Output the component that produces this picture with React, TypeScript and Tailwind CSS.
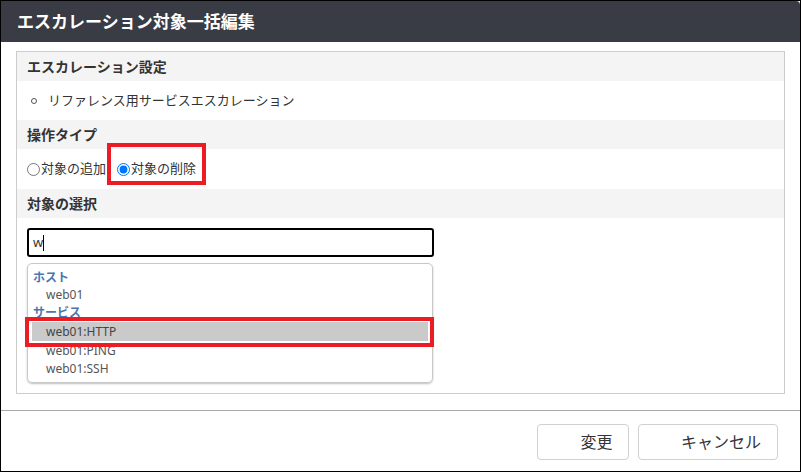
import React from "react";

const font = { fontFamily: '"Noto Sans", "Noto Sans CJK JP", sans-serif' };

function SectionHeader({ children }: { children: React.ReactNode }) {
  return (
    <div className="h-[29px] bg-[#f4f4f4] px-[10px] flex items-center text-[14px] font-bold text-[#333]">
      {children}
    </div>
  );
}

const items = [
  { group: "ホスト", rows: ["web01"] },
  { group: "サービス", rows: ["web01:HTTP", "web01:PING", "web01:SSH"] },
];

export default function App() {
  return (
    <div
      className="w-[801px] h-[472px] border border-black bg-white flex flex-col text-[#333]"
      style={font}
    >
      {/* タイトル */}
      <div className="h-[41px] shrink-0 bg-[#393c44] rounded-tr-[4px] pl-4 flex items-center text-white text-[17px] font-bold">
        エスカレーション対象一括編集
      </div>

      <div className="pt-[9px] px-[15px]">
        <div className="border border-[#cccccc]">
          <SectionHeader>エスカレーション設定</SectionHeader>
          <div className="h-[39px] flex items-center pl-[14px] text-[13px] text-[#333]">
            <span className="w-[6px] h-[6px] rounded-full border border-[#555] mr-[11px]" />
            リファレンス用サービスエスカレーション
          </div>

          <SectionHeader>操作タイプ</SectionHeader>
          <div className="h-[40px] flex items-center pl-[10px] text-[13px]">
            <label className="flex items-center">
              <input type="radio" name="op" className="w-[13px] h-[13px] m-0 mr-[1px]" readOnly />
              対象の追加
            </label>
            <label className="relative flex items-center ml-[11px]">
              <input
                type="radio"
                name="op"
                defaultChecked
                className="w-[13px] h-[13px] m-0 mr-[1px] accent-[#0075ff]"
              />
              対象の削除
              <span className="absolute left-[-10px] top-[-16px] w-[99px] h-[42px] border-4 border-[#ec1c24]" />
            </label>
          </div>

          <SectionHeader>対象の選択</SectionHeader>
          <div className="px-[10px] pt-[10px] pb-[10px]">
            <div className="w-[407px] h-[29px] border-2 border-black rounded-[3px] flex items-center pl-[4px] text-[13px]">
              w<span className="w-px h-[16px] bg-black" />
            </div>
            <div className="relative mt-[6px] w-[406px] h-[120px] border border-[#c8c8c8] rounded-[5px] shadow-[0_1px_2px_rgba(0,0,0,0.25)] pt-[5px] text-[12px]">
              {items.map((g) => (
                <div key={g.group}>
                  <div className="h-[17px] leading-[17px] pl-[5px] text-[#4a76b0] font-semibold">{g.group}</div>
                  {g.rows.map((r) => (
                    <div
                      key={r}
                      className={
                        r === "web01:HTTP"
                          ? "relative h-[19px] leading-[19px] pl-[14px] mx-[4px] my-px bg-[#cacaca] text-[#444] outline outline-1 outline-white"
                          : "h-[18px] leading-[18px] pl-[18px] text-[#555]"
                      }
                    >
                      {r}
                      {r === "web01:HTTP" && (
                        <span className="absolute left-[-7px] top-[-5px] right-[-6px] bottom-[-6px] border-[4px] border-[#ec1c24]" />
                      )}
                    </div>
                  ))}
                </div>
              ))}
            </div>
          </div>
        </div>
      </div>

      <div className="flex-1" />
      <div className="h-px bg-[#aaaaaa]" />
      <div className="h-[60px] flex justify-end items-start pt-[13px] pr-[22px] gap-[9px]">
        <button className="w-[92px] h-[36px] border border-[#d0d0d0] rounded-[4px] bg-white text-[16px] text-[#333] pl-[27px]">
          変更
        </button>
        <button className="w-[140px] h-[36px] border border-[#d0d0d0] rounded-[4px] bg-white text-[16px] text-[#333] pl-[26px]">
          キャンセル
        </button>
      </div>
    </div>
  );
}
